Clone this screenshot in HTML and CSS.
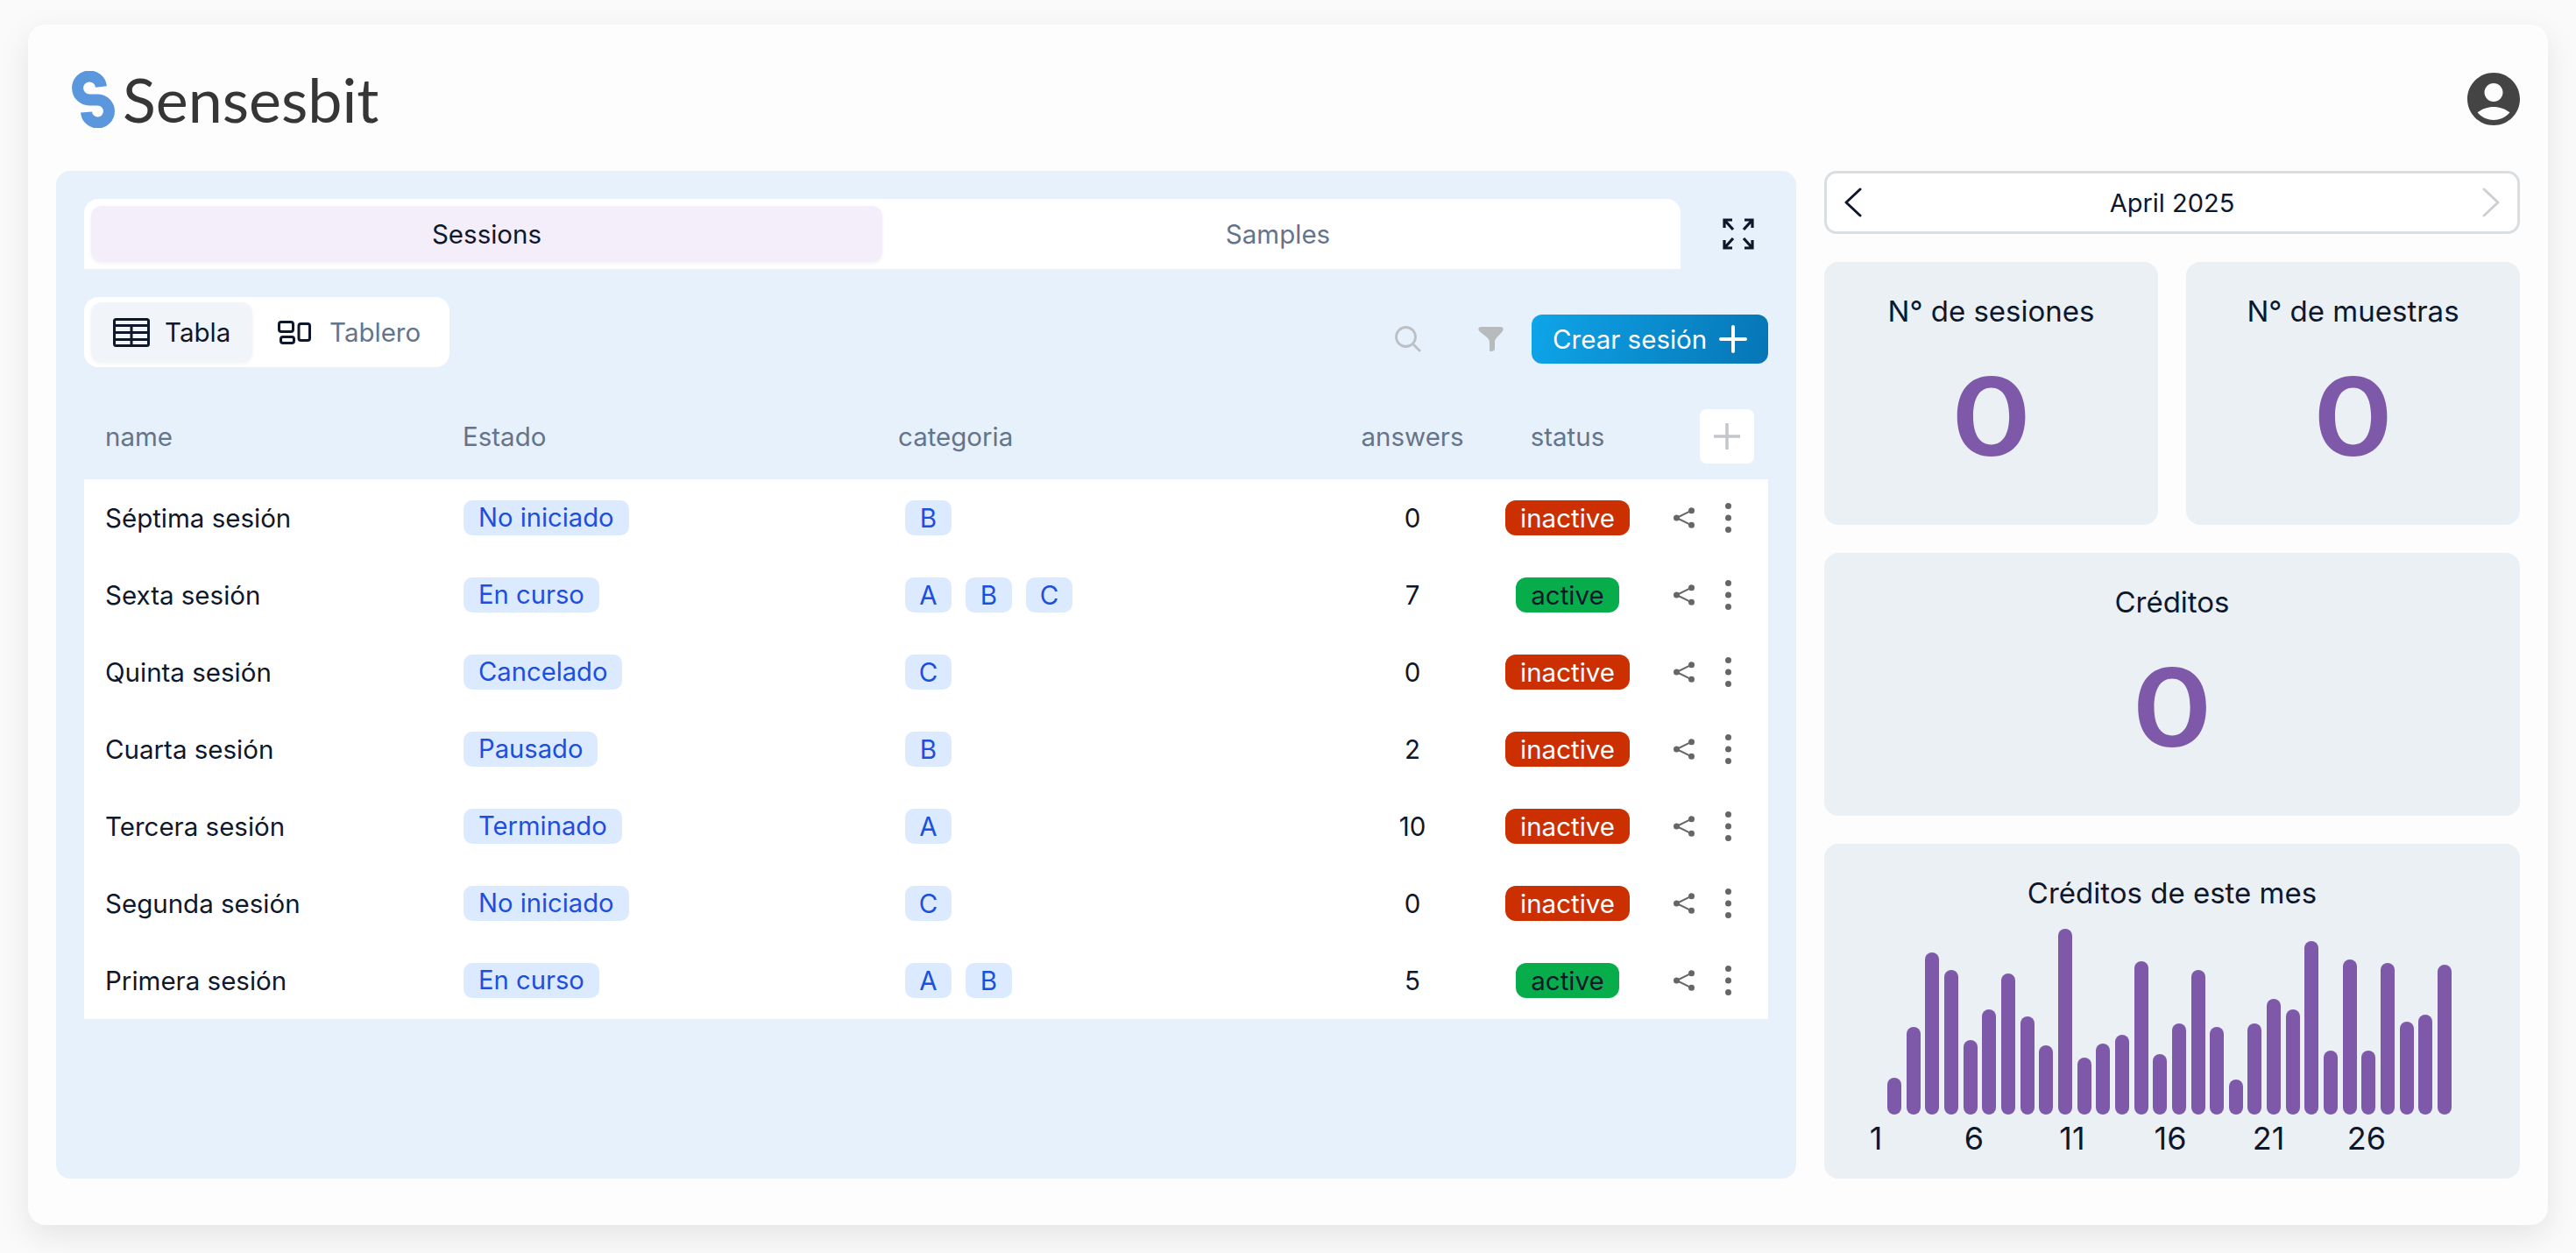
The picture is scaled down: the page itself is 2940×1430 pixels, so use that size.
FILE: index.html
```html
<!DOCTYPE html>
<html lang="es">
<head>
<meta charset="utf-8">
<title>Sensesbit</title>
<link rel="stylesheet" href="styles.css">
</head>
<body>
<div class="app">
  <header class="top">
    <div class="logo">
      <svg class="logo-s" viewBox="0 0 49 65"><path d="M33.500 18A13.500 13.500 0 1 0 20 33H30A13 13 0 1 1 16.500 47" fill="none" stroke="#5a97dd" stroke-width="13"/></svg>
      <span class="logo-text">Sensesbit</span>
    </div>
    <svg class="avatar" viewBox="2 2 20 20"><path fill="#444" d="M12 2C6.480 2 2 6.480 2 12s4.480 10 10 10 10-4.480 10-10S17.520 2 12 2zm0 4c1.930 0 3.500 1.570 3.500 3.500S13.930 13 12 13s-3.500-1.570-3.500-3.500S10.070 6 12 6zm0 14c-2.030 0-4.430-.82-6.140-2.880C7.550 15.800 9.680 15 12 15s4.450.8 6.140 2.120C16.430 19.180 14.030 20 12 20z"/></svg>
  </header>
  <main class="main">
    <section class="panel">
      <div class="tabs-row">
        <div class="tabs">
          <div class="tab tab-active">Sessions</div>
          <div class="tab">Samples</div>
        </div>
        <svg class="expand" viewBox="0 0 36 36" fill="none" stroke="#0f172a" stroke-width="3.200"><path d="M2 11V2h9M2 2l10 11M34 11V2h-9M34 2L24 13M2 25v9h9M2 34l10-11M34 25v9h-9M34 34L24 23"/></svg>
      </div>
      <div class="toolbar">
        <div class="views">
          <div class="view view-active">
            <svg class="ic-table" viewBox="0 0 42 33" fill="none" stroke="#0f172a" stroke-width="3"><rect x="1.500" y="1.500" width="39" height="30" rx="2"/><path d="M1.500 8.500h39M1.500 16.500h39M1.500 24.500h39M21 8.500v23"/></svg>
            <span>Tabla</span>
          </div>
          <div class="view view-board">
            <svg class="ic-board" viewBox="0 0 38 27" fill="none" stroke="#0f172a" stroke-width="3"><rect x="1.500" y="1.500" width="16" height="11" rx="2.500"/><rect x="3.500" y="18.500" width="15" height="7" rx="2.500"/><rect x="24" y="3.500" width="12.500" height="19" rx="2.500"/></svg>
            <span>Tablero</span>
          </div>
        </div>
        <div class="tools">
          <svg class="ic-search" viewBox="0 0 30 30" fill="none" stroke="#bcc0c4" stroke-width="2.800"><circle cx="12.500" cy="12.500" r="11"/><path d="M20.500 20.500L29 29"/></svg>
          <svg class="ic-filter" viewBox="0 0 29 28"><path fill="#b7bbbe" d="M4 0H25C28 0 29 1.500 28.500 3.500 28 6 24 9 21.500 12 19.500 14 19 15.500 19 18V25C19 27 17 27.700 15 28H14C13.300 28 13 27.500 13 26.500V18C13 15.500 12 14 10 12 7 9 1.500 6 .5 3.500 0 1.500 1 0 4 0Z"/></svg>
          <button class="create">Crear sesión<svg class="ic-plus" viewBox="0 0 32 32" stroke="#fff" stroke-width="4" stroke-linecap="round"><path d="M16 2v28M2 16h28"/></svg></button>
        </div>
      </div>
      <div class="grid head">
        <div>name</div>
        <div>Estado</div>
        <div>categoria</div>
        <div class="center">answers</div>
        <div class="center">status</div>
        <div class="head-add"><span class="add"><svg viewBox="0 0 30 30" stroke="#c3c6ca" stroke-width="3.500"><path d="M15 0v30M0 15h30"/></svg></span></div>
      </div>
      <div class="rows">
        <div class="grid row">
          <div>Séptima sesión</div>
          <div><span class="tag">No iniciado</span></div>
          <div class="chips"><span class="chip">B</span></div>
          <div class="center">0</div>
          <div class="center"><span class="state off">inactive</span></div>
          <div class="acts"><svg class="ic-share" viewBox="0 0 24 24"><use href="#share"/></svg><svg class="ic-dots" viewBox="0 0 7 34"><use href="#dots"/></svg></div>
        </div>
        <div class="grid row">
          <div>Sexta sesión</div>
          <div><span class="tag">En curso</span></div>
          <div class="chips"><span class="chip">A</span><span class="chip">B</span><span class="chip">C</span></div>
          <div class="center">7</div>
          <div class="center"><span class="state on">active</span></div>
          <div class="acts"><svg class="ic-share" viewBox="0 0 24 24"><use href="#share"/></svg><svg class="ic-dots" viewBox="0 0 7 34"><use href="#dots"/></svg></div>
        </div>
        <div class="grid row">
          <div>Quinta sesión</div>
          <div><span class="tag">Cancelado</span></div>
          <div class="chips"><span class="chip">C</span></div>
          <div class="center">0</div>
          <div class="center"><span class="state off">inactive</span></div>
          <div class="acts"><svg class="ic-share" viewBox="0 0 24 24"><use href="#share"/></svg><svg class="ic-dots" viewBox="0 0 7 34"><use href="#dots"/></svg></div>
        </div>
        <div class="grid row">
          <div>Cuarta sesión</div>
          <div><span class="tag">Pausado</span></div>
          <div class="chips"><span class="chip">B</span></div>
          <div class="center">2</div>
          <div class="center"><span class="state off">inactive</span></div>
          <div class="acts"><svg class="ic-share" viewBox="0 0 24 24"><use href="#share"/></svg><svg class="ic-dots" viewBox="0 0 7 34"><use href="#dots"/></svg></div>
        </div>
        <div class="grid row">
          <div>Tercera sesión</div>
          <div><span class="tag">Terminado</span></div>
          <div class="chips"><span class="chip">A</span></div>
          <div class="center">10</div>
          <div class="center"><span class="state off">inactive</span></div>
          <div class="acts"><svg class="ic-share" viewBox="0 0 24 24"><use href="#share"/></svg><svg class="ic-dots" viewBox="0 0 7 34"><use href="#dots"/></svg></div>
        </div>
        <div class="grid row">
          <div>Segunda sesión</div>
          <div><span class="tag">No iniciado</span></div>
          <div class="chips"><span class="chip">C</span></div>
          <div class="center">0</div>
          <div class="center"><span class="state off">inactive</span></div>
          <div class="acts"><svg class="ic-share" viewBox="0 0 24 24"><use href="#share"/></svg><svg class="ic-dots" viewBox="0 0 7 34"><use href="#dots"/></svg></div>
        </div>
        <div class="grid row">
          <div>Primera sesión</div>
          <div><span class="tag">En curso</span></div>
          <div class="chips"><span class="chip">A</span><span class="chip">B</span></div>
          <div class="center">5</div>
          <div class="center"><span class="state on">active</span></div>
          <div class="acts"><svg class="ic-share" viewBox="0 0 24 24"><use href="#share"/></svg><svg class="ic-dots" viewBox="0 0 7 34"><use href="#dots"/></svg></div>
        </div>
      </div>
    </section>
    <aside class="side">
      <div class="month">
        <svg class="chev" viewBox="0 0 20 34" fill="none" stroke="#0f172a" stroke-width="3" stroke-linecap="round" stroke-linejoin="round"><path d="M18 2L2 17l16 15"/></svg>
        <span>April 2025</span>
        <svg class="chev" viewBox="0 0 20 34" fill="none" stroke="#ccd0d4" stroke-width="3" stroke-linecap="round" stroke-linejoin="round"><path d="M2 2l16 15L2 32"/></svg>
      </div>
      <div class="pair">
        <div class="stat"><div class="stat-title">N° de sesiones</div><div class="stat-value">0</div></div>
        <div class="stat"><div class="stat-title">N° de muestras</div><div class="stat-value">0</div></div>
      </div>
      <div class="stat"><div class="stat-title">Créditos</div><div class="stat-value">0</div></div>
      <div class="stat chart">
        <div class="stat-title">Créditos de este mes</div>
        <div class="bars">
          <i style="height:42px"></i><i style="height:100px"></i><i style="height:185px"></i><i style="height:165px"></i><i style="height:85px"></i><i style="height:120px"></i><i style="height:161px"></i><i style="height:112px"></i><i style="height:79px"></i><i style="height:212px"></i><i style="height:65px"></i><i style="height:81px"></i><i style="height:91px"></i><i style="height:175px"></i><i style="height:69px"></i><i style="height:104px"></i><i style="height:165px"></i><i style="height:100px"></i><i style="height:40px"></i><i style="height:104px"></i><i style="height:132px"></i><i style="height:120px"></i><i style="height:198px"></i><i style="height:73px"></i><i style="height:177px"></i><i style="height:73px"></i><i style="height:173px"></i><i style="height:106px"></i><i style="height:114px"></i><i style="height:171px"></i>
        </div>
        <div class="days"><span>1</span><span>6</span><span>11</span><span>16</span><span>21</span><span>26</span></div>
      </div>
    </aside>
  </main>
</div>
<svg class="defs" width="0" height="0">
  <symbol id="share" viewBox="0 0 24 24"><g fill="#666"><circle cx="20.500" cy="3.700" r="3.500"/><circle cx="3.500" cy="12" r="3.500"/><circle cx="20.500" cy="20.300" r="3.500"/></g><path d="M20.500 3.700L3.500 12l17 8.300" fill="none" stroke="#666" stroke-width="2"/></symbol>
  <symbol id="dots" viewBox="0 0 7 34"><g fill="#666"><circle cx="3.500" cy="3.500" r="3.500"/><circle cx="3.500" cy="17" r="3.500"/><circle cx="3.500" cy="30.500" r="3.500"/></g></symbol>
</svg>
</body>
</html>
```
FILE: styles.css
```css
* { box-sizing: border-box; }
html, body { margin: 0; height: 100%; }
body {
  background: #fafafa;
  font-family: Inter, "Open Sans", sans-serif;
  font-size: 29.500px;
  color: #0f172a;
  padding: 28px 32px;
  overflow: hidden;
}
.defs { position: absolute; }
.app {
  width: 2876px;
  height: 1370px;
  background: #fdfdfd;
  border-radius: 20px;
  box-shadow: 0 12px 36px rgba(0, 0, 0, .09);
  padding: 0 32px;
}
.top {
  height: 167px;
  display: flex;
  justify-content: space-between;
  align-items: flex-start;
  padding: 53px 0 0 18px;
}
.logo { display: flex; align-items: center; gap: 9px; }
.logo-s { width: 49px; height: 65px; }
.logo-text {
  font-family: Lato, sans-serif;
  font-size: 70px;
  line-height: 65px;
  color: #363636;
}
.avatar { width: 60px; height: 60px; margin-top: 2px; }
.main { display: flex; gap: 32px; }
.panel {
  width: 1986px;
  height: 1150px;
  background: #e7f1fb;
  border-radius: 16px;
  padding: 32px 32px 0;
}
.tabs-row { display: flex; align-items: center; }
.tabs {
  width: 1822px;
  height: 80px;
  background: #fff;
  border-radius: 16px 16px 0 0;
  padding: 8px;
  display: flex;
}
.tab {
  flex: 1;
  display: flex;
  align-items: center;
  justify-content: center;
  color: #64748b;
  border-radius: 12px;
}
.tab-active {
  background: #f3eef9;
  color: #0f172a;
  box-shadow: 0 2px 4px rgba(0, 0, 0, .05);
}
.expand { width: 36px; height: 36px; margin-left: 48px; }
.toolbar {
  margin-top: 32px;
  display: flex;
  justify-content: space-between;
  align-items: flex-start;
}
.views {
  height: 80px;
  width: 417px;
  background: #fff;
  border-radius: 16px;
  padding: 6px 8px;
  display: flex;
}
.view {
  display: flex;
  align-items: center;
  gap: 17px;
  padding: 0 25px;
  color: #64748b;
  border-radius: 12px;
  white-space: nowrap;
}
.view-board { padding: 0 0 0 29px; gap: 21px; }
.view-active {
  width: 184px;
  background: #f1f5f9;
  color: #0f172a;
  box-shadow: 0 2px 4px rgba(0, 0, 0, .05);
}
.ic-table { width: 42px; height: 33px; flex: none; }
.ic-board { width: 38px; height: 27px; flex: none; }
.tools { display: flex; align-items: center; padding-top: 20px; }
.ic-search { width: 30px; height: 30px; }
.ic-filter { width: 29px; height: 28px; margin-left: 65px; }
.create {
  margin-left: 32px;
  width: 270px;
  height: 56px;
  border: 0;
  border-radius: 12px;
  background: linear-gradient(105deg, #0ea5e9, #0675b5);
  color: #fff;
  font: inherit;
  display: flex;
  align-items: center;
  justify-content: space-between;
  padding: 0 24px;
  white-space: nowrap;
}
.ic-plus { width: 32px; height: 32px; flex: none; }
.grid {
  display: grid;
  grid-template-columns: 408px 497px 487px 200px 154px 152px;
  padding-left: 24px;
  align-items: center;
}
.head {
  margin-top: 48px;
  height: 80px;
  color: #64748b;
  align-items: start;
  line-height: 62px;
}
.center { text-align: center; }
.head-add { padding-left: 74px; }
.add {
  width: 62px;
  height: 62px;
  background: #fff;
  border-radius: 8px;
  display: flex;
  align-items: center;
  justify-content: center;
}
.add svg { width: 30px; height: 30px; }
.rows { background: #fff; }
.row { height: 88px; }
.tag, .chip, .state {
  display: inline-block;
  height: 40px;
  line-height: 40px;
  border-radius: 10px;
  white-space: nowrap;
}
.tag, .chip { background: #dbeafe; color: #1d4fdf; }
.tag { padding: 0 17px; margin-left: 1px; font-size: 29.200px; }
.chips { display: flex; gap: 16px; padding-left: 8px; }
.chip { min-width: 53px; text-align: center; }
.state { padding: 0 17px; border-radius: 12px; }
.off { background: #cc2f00; color: #fff; }
.on { background: #07ad4b; color: #0f172a; }
.acts { display: flex; align-items: center; padding-left: 44px; }
.ic-share { width: 24px; height: 24px; }
.ic-dots { width: 7px; height: 34px; margin-left: 35px; }
.side { width: 794px; display: flex; flex-direction: column; gap: 32px; }
.month {
  height: 72px;
  background: #fff;
  border: 3px solid #d9dee3;
  border-radius: 14px;
  display: flex;
  justify-content: space-between;
  align-items: center;
  padding: 0 20px;
  font-size: 29px;
}
.chev { width: 20px; height: 34px; }
.pair { display: flex; gap: 32px; }
.pair .stat { flex: 1; }
.stat {
  height: 300px;
  background: #ebf0f5;
  border-radius: 16px;
  padding-top: 32px;
  text-align: center;
}
.stat-title { line-height: 48px; font-size: 33px; }
.stat-value {
  margin-top: 31px;
  height: 130px;
  font-size: 124px;
  line-height: 130px;
  font-weight: 600;
  color: #7f59a9;
  transform: scaleX(1.12);
}
.chart { height: 382px; }
.bars {
  height: 214px;
  margin-top: 15px;
  padding-left: 72px;
  display: flex;
  gap: 5.660px;
  align-items: flex-end;
}
.bars i { width: 16px; background: #7f59a9; border-radius: 8px; flex: none; }
.days {
  display: flex;
  padding-left: 3px;
  font-size: 36px;
  line-height: 54px;
}
.days span { width: 112px; text-align: center; }
```
